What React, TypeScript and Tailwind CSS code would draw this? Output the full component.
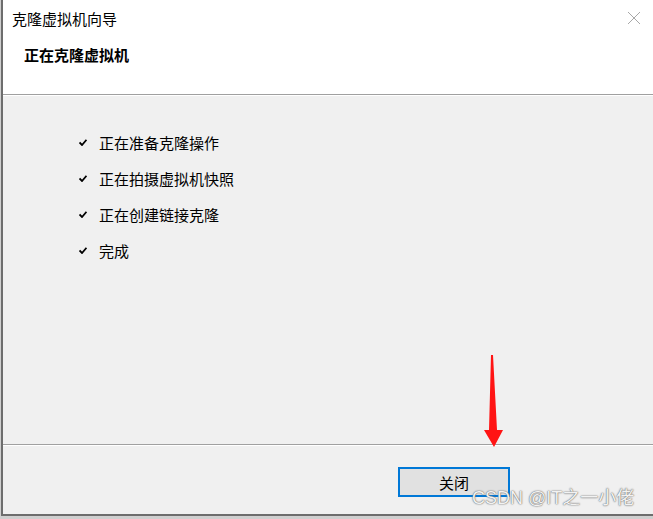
const steps = ["正在准备克隆操作", "正在拍摄虚拟机快照", "正在创建链接克隆", "完成"];

function Check() {
  return (
    <svg width="8" height="7" viewBox="0 0 8 7" className="shrink-0">
      <path d="M0.5 3.5 L3 6 L7.5 0.8" fill="none" stroke="#000" strokeWidth="1.8" />
    </svg>
  );
}

export default function App() {
  return (
    <div
      className="relative w-[653px] h-[519px] bg-[#cfcfcf] overflow-hidden text-black"
      style={{ fontFamily: '"Noto Sans CJK SC", "Noto Sans", sans-serif' }}
    >
      <div className="h-[516px] ml-px border-l-2 border-b-2 border-[#6d6d6d] bg-[#f0f0f0] flex flex-col">
        {/* header */}
        <div className="h-[94px] bg-white flex flex-col">
          <div className="h-[36px] flex items-center justify-between pl-[9px] pr-[12px]">
            <span className="text-[15px] leading-none">克隆虚拟机向导</span>
            <svg width="14" height="14" viewBox="0 0 14 14" className="mt-[-1px]">
              <path d="M1 1 L13 13 M13 1 L1 13" stroke="#a8a8a8" strokeWidth="1" />
            </svg>
          </div>
          <div className="pl-[21px] pt-[11px] text-[15px] font-bold leading-none">正在克隆虚拟机</div>
        </div>
        <div className="border-t border-[#a0a0a0] border-b border-b-white" />

        {/* steps */}
        <div className="flex-1 pl-[76px] pt-[28px]">
          {steps.map((s) => (
            <div key={s} className="h-[36px] flex items-center gap-[12px]">
              <Check />
              <span className="text-[15px] leading-none">{s}</span>
            </div>
          ))}
        </div>

        <div className="border-t border-[#a0a0a0] border-b border-b-white" />

        {/* footer */}
        <div className="h-[68px] flex justify-end items-start pt-[21px] pr-[143px]">
          <button className="w-[112px] h-[30px] bg-[#e1e1e1] border-2 border-[#0078d7] text-[15px] leading-none flex items-center justify-center">
            关闭
          </button>
        </div>
      </div>

      {/* annotation arrow */}
      <svg className="absolute left-[480px] top-[352px]" width="28" height="100" viewBox="0 0 28 100">
        <path d="M11 3 L13 3 L17 78 L23 78 L14 95 L4 78 L9 78 Z" fill="#ff1414" />
      </svg>

      {/* watermark */}
      <div
        className="absolute left-[472px] top-[489px] text-[18px] leading-none text-[#f2f2f2] [text-shadow:0_0_1px_#555,0_0_2px_#888]"
        style={{ fontFamily: '"Liberation Sans", "Noto Sans CJK SC", sans-serif' }}
      >
        CSDN @IT之一小佬
      </div>
    </div>
  );
}
